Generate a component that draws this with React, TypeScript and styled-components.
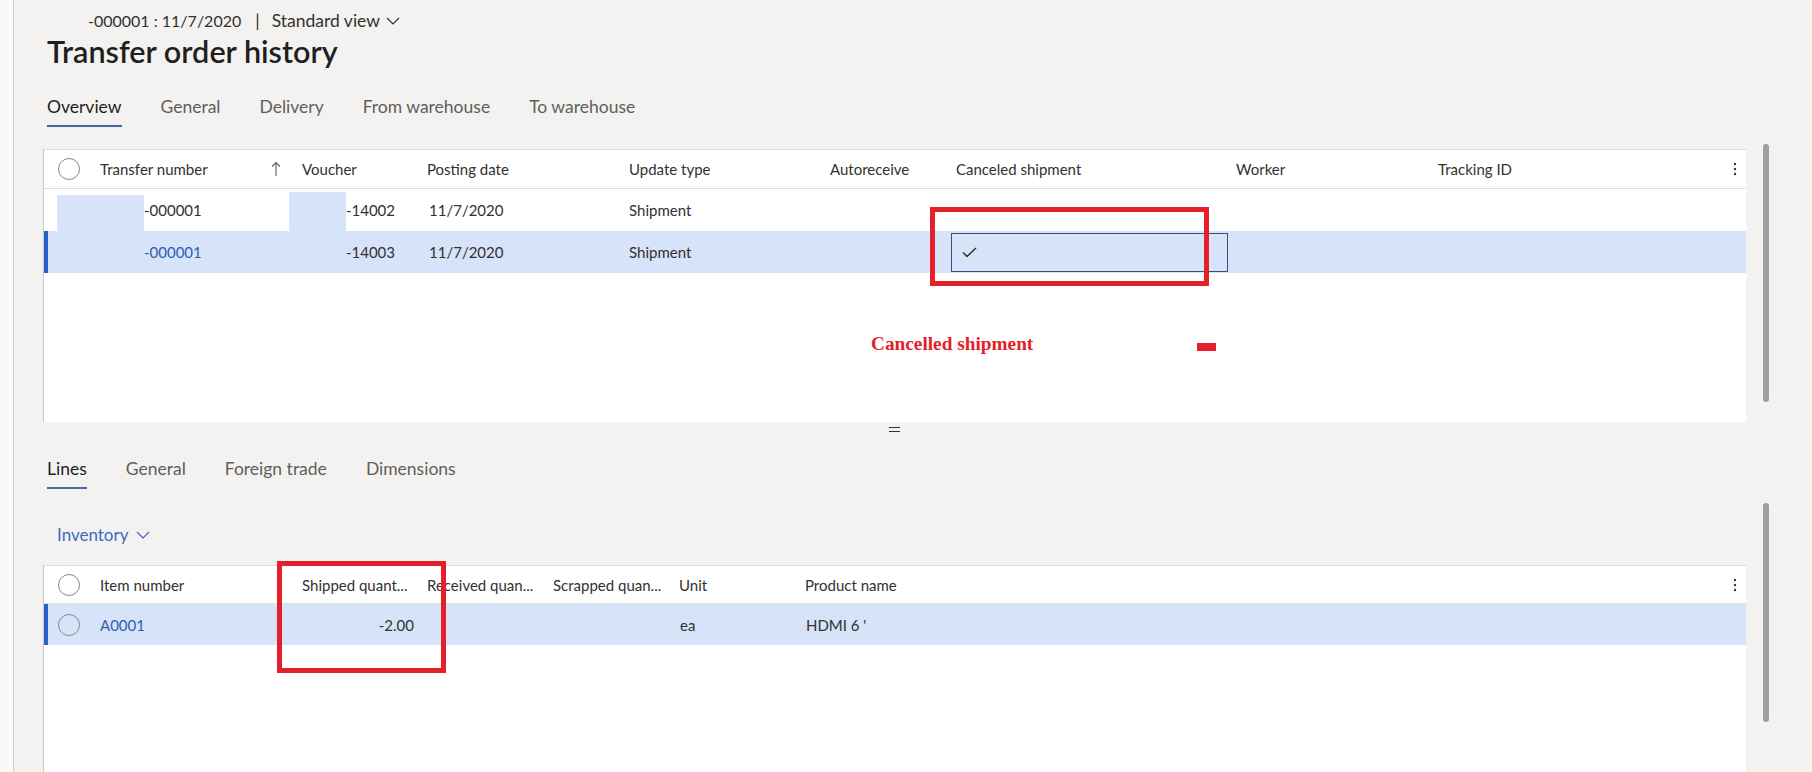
import React from "react";
import styled, { createGlobalStyle } from "styled-components";

const GlobalStyle = createGlobalStyle`
  html, body { margin: 0; padding: 0; background: #f3f2f1; }
  body { font-family: Lato, "Noto Sans", Arial, sans-serif; color: #323130; overflow: hidden; }
  * { box-sizing: border-box; }
`;

const Page = styled.div`
  display: flex;
  height: 100vh;
  width: 100%;
`;

const LeftStrip = styled.div`
  flex: none;
  width: 14px;
  background: #faf9f8;
  border-right: 1px solid #d2d0ce;
`;

const Main = styled.div`
  flex: 1;
  min-width: 0;
  display: flex;
  flex-direction: column;
`;

const Header = styled.header`
  padding-left: 33px;
`;

const Breadcrumb = styled.div`
  display: flex;
  align-items: center;
  padding-top: 9px;
  margin-left: 41px;
  font-size: 17.5px;
  line-height: 24px;
  color: #323130;
`;

const RecordId = styled.span`
  font-size: 16px;
`;

const Sep = styled.span`
  margin: 0 12px 0 14px;
`;

const Chevron = styled.svg<{ $ml: number }>`
  margin-left: ${(p) => p.$ml}px;
  flex: none;
`;

const Title = styled.h1`
  margin: 1px 0 0;
  font-size: 30.6px;
  line-height: 36px;
  font-weight: 600;
  color: #201f1e;
`;

const TabBar = styled.nav<{ $mt: number; $pl: number; $gap: number }>`
  display: flex;
  gap: ${(p) => p.$gap}px;
  margin-top: ${(p) => p.$mt}px;
  padding-left: ${(p) => p.$pl}px;
`;

const Tab = styled.div<{ $active?: boolean }>`
  font-size: 17.5px;
  line-height: 24px;
  padding-bottom: 6px;
  border-bottom: 2px solid ${(p) => (p.$active ? "#45689e" : "transparent")};
  color: ${(p) => (p.$active ? "#201f1e" : "#605e5c")};
`;

const Pane = styled.section<{ $mt?: number; $grow?: boolean }>`
  display: flex;
  margin-top: ${(p) => p.$mt ?? 0}px;
  ${(p) => (p.$grow ? "flex: 1; min-height: 0;" : "")}
`;

const Card = styled.div<{ $height?: number; $mt?: number }>`
  position: relative;
  flex: 1;
  min-width: 0;
  margin-left: 29px;
  margin-top: ${(p) => p.$mt ?? 0}px;
  ${(p) => (p.$height ? `height: ${p.$height}px;` : "")}
  background: #ffffff;
  border-top: 1px solid #e1dfdd;
  border-left: 1px solid #c8c6c4;
`;

const Gutter = styled.div`
  flex: none;
  width: 66px;
  padding-left: 17px;
`;

const Thumb = styled.div<{ $top: number; $h: number }>`
  width: 6px;
  margin-top: ${(p) => p.$top}px;
  height: ${(p) => p.$h}px;
  border-radius: 3px;
  background: #a19f9d;
`;

const GridRow = styled.div<{ $cols: string; $h: number; $head?: boolean; $selected?: boolean }>`
  position: relative;
  display: grid;
  grid-template-columns: ${(p) => p.$cols};
  height: ${(p) => p.$h}px;
  align-items: center;
  font-size: 15px;
  color: #323130;
  background: ${(p) => (p.$selected ? "#d7e3f8" : "#ffffff")};
  border-bottom: ${(p) => (p.$head ? "1px solid #e1dfdd" : "none")};
  box-shadow: ${(p) => (p.$selected ? "inset 4px 0 0 #2563c8" : "none")};
`;

const Cell = styled.div<{ $pl?: number; $pr?: number; $right?: boolean; $link?: boolean }>`
  display: flex;
  align-items: center;
  justify-content: ${(p) => (p.$right ? "flex-end" : "flex-start")};
  height: 100%;
  padding-left: ${(p) => p.$pl ?? 10}px;
  padding-right: ${(p) => p.$pr ?? 0}px;
  white-space: nowrap;
  overflow: hidden;
  color: ${(p) => (p.$link ? "#2b5fad" : "inherit")};
`;

const SortCell = styled(Cell)`
  justify-content: space-between;
  padding-right: 9px;
`;

const Circle = styled.span`
  display: block;
  width: 22px;
  height: 22px;
  margin-left: 14px;
  border: 1px solid #8a8886;
  border-radius: 50%;
`;

const Redaction = styled.span<{ $left: number; $top: number; $w: number }>`
  position: absolute;
  left: ${(p) => p.$left}px;
  top: ${(p) => p.$top}px;
  bottom: 0;
  width: ${(p) => p.$w}px;
  background: #d7e3f8;
`;

const FocusBox = styled.div`
  display: flex;
  align-items: center;
  width: 277px;
  height: 39px;
  margin-left: 5px;
  padding-left: 10px;
  border: 1px solid #32507f;
`;

const MoreCell = styled.div`
  display: flex;
  justify-content: center;
  align-items: center;
`;

const RedFrame = styled.div<{ $l: number; $t: number; $w: number; $h: number }>`
  position: absolute;
  left: ${(p) => p.$l}px;
  top: ${(p) => p.$t}px;
  width: ${(p) => p.$w}px;
  height: ${(p) => p.$h}px;
  border: 5px solid #e5202a;
  pointer-events: none;
`;

const Note = styled.div`
  position: absolute;
  left: 827px;
  top: 184px;
  font-family: "Liberation Serif", "Times New Roman", serif;
  font-weight: 700;
  font-size: 19.3px;
  line-height: 20px;
  color: #e5202a;
  white-space: nowrap;
`;

const NoteMark = styled.div`
  position: absolute;
  left: 1153px;
  top: 193px;
  width: 19px;
  height: 8px;
  background: #e5202a;
`;

const SplitterRow = styled.div`
  display: flex;
  justify-content: center;
  align-items: center;
  height: 14px;
  padding: 0 66px 0 29px;
`;

const SplitterMark = styled.span`
  display: block;
  width: 11px;
  height: 5px;
  border-top: 1.5px solid #323130;
  border-bottom: 1.5px solid #323130;
`;

const LowerContent = styled.div`
  flex: 1;
  min-width: 0;
  display: flex;
  flex-direction: column;
  padding-top: 21px;
`;

const Inventory = styled.div`
  display: flex;
  align-items: center;
  margin-top: 34px;
  padding-left: 43px;
  font-size: 17px;
  line-height: 24px;
  color: #3a6bc0;
`;

const ChevronDown = ({ ml, color }: { ml: number; color: string }) => (
  <Chevron $ml={ml} width="14" height="8" viewBox="0 0 14 8">
    <polyline points="1,1 7,7 13,1" fill="none" stroke={color} strokeWidth="1.2" />
  </Chevron>
);

const SortArrow = () => (
  <svg width="10" height="16" viewBox="0 0 10 16">
    <line x1="5" y1="1.5" x2="5" y2="15" stroke="#605e5c" strokeWidth="1.1" />
    <polyline points="1,5.5 5,1.5 9,5.5" fill="none" stroke="#605e5c" strokeWidth="1.1" />
  </svg>
);

const MoreIcon = () => (
  <svg width="4" height="16" viewBox="0 0 4 16">
    <circle cx="2" cy="3" r="1.2" fill="#323130" />
    <circle cx="2" cy="8" r="1.2" fill="#323130" />
    <circle cx="2" cy="13" r="1.2" fill="#323130" />
  </svg>
);

const Check = () => (
  <svg width="15" height="11" viewBox="0 0 15 11">
    <polyline points="1,5.5 5,9.5 14,1" fill="none" stroke="#323130" strokeWidth="1.5" />
  </svg>
);

const COLS1 = "45px 201px 126px 203px 201px 126px 282px 200px 1fr 22px";
const COLS2 = "45px 208px 125px 126px 126px 126px 1fr 22px";

export default function App() {
  return (
    <>
      <GlobalStyle />
      <Page>
        <LeftStrip />
        <Main>
          <Header>
            <Breadcrumb>
              <RecordId>-000001 : 11/7/2020</RecordId>
              <Sep>|</Sep>
              <span>Standard view</span>
              <ChevronDown ml={6} color="#323130" />
            </Breadcrumb>
            <Title>Transfer order history</Title>
            <TabBar $mt={25} $pl={0} $gap={39}>
              <Tab $active>Overview</Tab>
              <Tab>General</Tab>
              <Tab>Delivery</Tab>
              <Tab>From warehouse</Tab>
              <Tab>To warehouse</Tab>
            </TabBar>
          </Header>

          <Pane $mt={22}>
            <Card $height={273}>
              <GridRow $cols={COLS1} $h={39} $head>
                <Cell $pl={0}>
                  <Circle />
                </Cell>
                <SortCell $pl={11}>
                  <span>Transfer number</span>
                  <SortArrow />
                </SortCell>
                <Cell $pl={12}>Voucher</Cell>
                <Cell $pl={11}>Posting date</Cell>
                <Cell>Update type</Cell>
                <Cell>Autoreceive</Cell>
                <Cell>Canceled shipment</Cell>
                <Cell $pl={8}>Worker</Cell>
                <Cell>Tracking ID</Cell>
                <MoreCell>
                  <MoreIcon />
                </MoreCell>
              </GridRow>
              <GridRow $cols={COLS1} $h={42}>
                <Cell />
                <Cell $pl={55}>-000001</Cell>
                <Cell $right $pr={21}>-14002</Cell>
                <Cell $pl={13}>11/7/2020</Cell>
                <Cell>Shipment</Cell>
                <Cell />
                <Cell />
                <Cell />
                <Cell />
                <Cell />
                <Redaction $left={13} $top={6} $w={87} />
                <Redaction $left={245} $top={3} $w={57} />
              </GridRow>
              <GridRow $cols={COLS1} $h={42} $selected>
                <Cell />
                <Cell $pl={55} $link>-000001</Cell>
                <Cell $right $pr={21}>-14003</Cell>
                <Cell $pl={13}>11/7/2020</Cell>
                <Cell>Shipment</Cell>
                <Cell />
                <Cell $pl={0}>
                  <FocusBox>
                    <Check />
                  </FocusBox>
                </Cell>
                <Cell />
                <Cell />
                <Cell />
              </GridRow>
              <RedFrame $l={886} $t={57} $w={279} $h={79} />
              <Note>Cancelled shipment</Note>
              <NoteMark />
            </Card>
            <Gutter>
              <Thumb $top={-5} $h={258} />
            </Gutter>
          </Pane>

          <SplitterRow>
            <SplitterMark />
          </SplitterRow>

          <Pane $grow>
            <LowerContent>
              <TabBar $mt={0} $pl={33} $gap={39}>
                <Tab $active>Lines</Tab>
                <Tab>General</Tab>
                <Tab>Foreign trade</Tab>
                <Tab>Dimensions</Tab>
              </TabBar>
              <Inventory>
                <span>Inventory</span>
                <ChevronDown ml={8} color="#3a6bc0" />
              </Inventory>
              <Card $mt={18}>
                <GridRow $cols={COLS2} $h={38} $head>
                  <Cell $pl={0}>
                    <Circle />
                  </Cell>
                  <Cell $pl={11}>Item number</Cell>
                  <Cell $pl={5}>Shipped quant...</Cell>
                  <Cell $pl={5}>Received quan...</Cell>
                  <Cell $pl={5}>Scrapped quan...</Cell>
                  <Cell $pl={5}>Unit</Cell>
                  <Cell $pl={5}>Product name</Cell>
                  <MoreCell>
                    <MoreIcon />
                  </MoreCell>
                </GridRow>
                <GridRow $cols={COLS2} $h={41} $selected>
                  <Cell $pl={0}>
                    <Circle />
                  </Cell>
                  <Cell $pl={11} $link>A0001</Cell>
                  <Cell $right $pr={8}>-2.00</Cell>
                  <Cell />
                  <Cell />
                  <Cell $pl={6}>ea</Cell>
                  <Cell $pl={6}>HDMI 6 '</Cell>
                  <Cell />
                </GridRow>
                <RedFrame $l={233} $t={-5} $w={169} $h={112} />
              </Card>
            </LowerContent>
            <Gutter>
              <Thumb $top={67} $h={219} />
            </Gutter>
          </Pane>
        </Main>
      </Page>
    </>
  );
}
